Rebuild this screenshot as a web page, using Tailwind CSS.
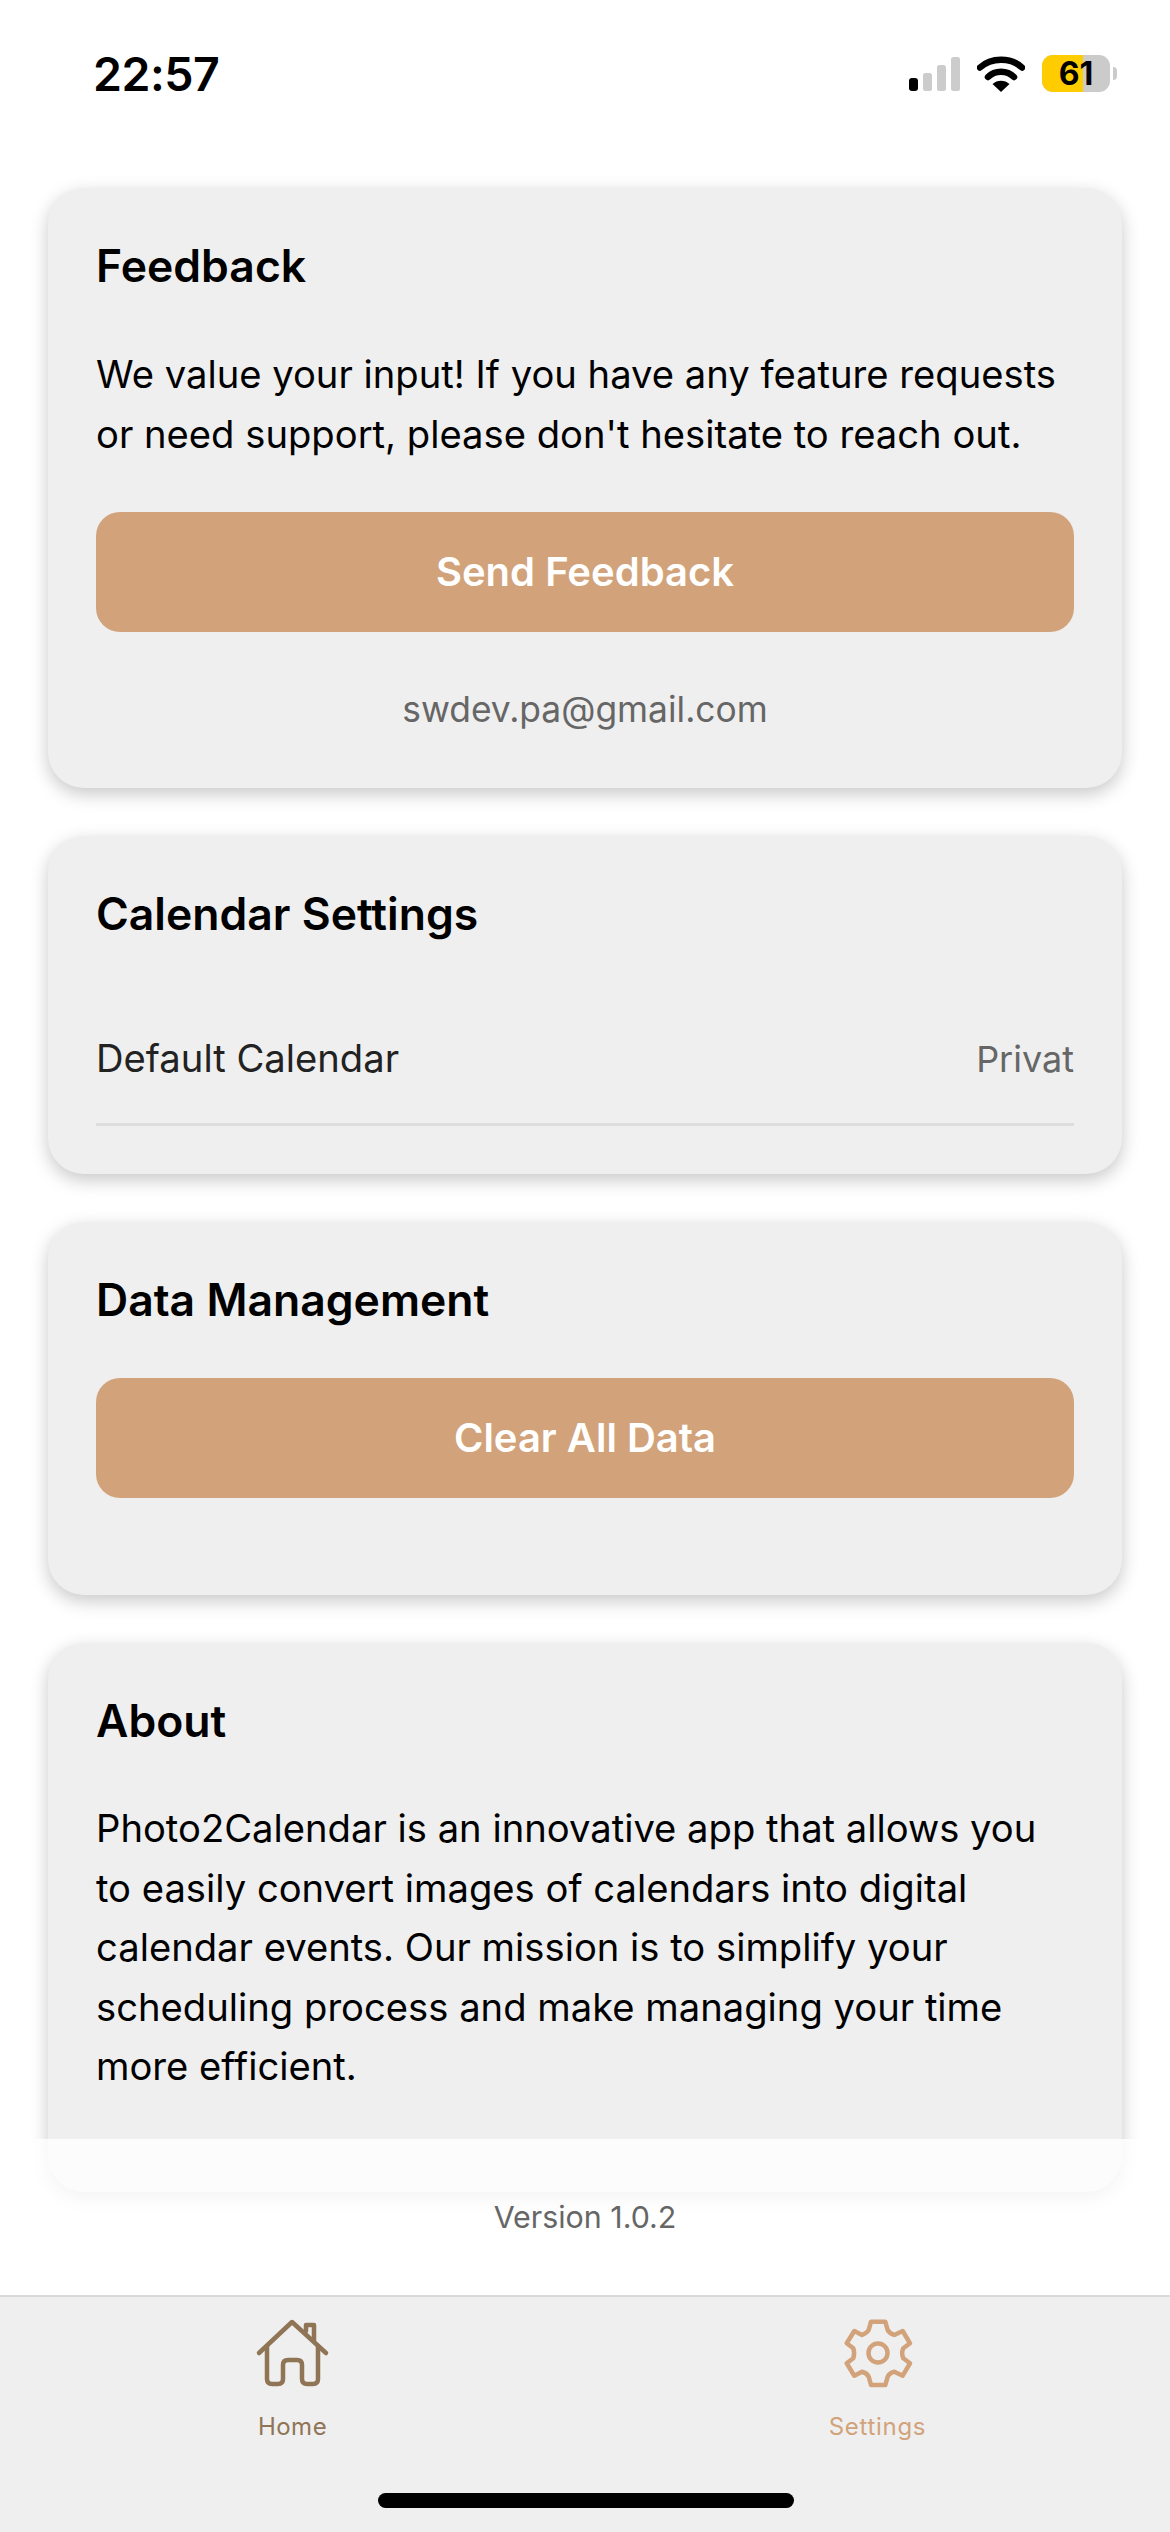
<!DOCTYPE html>
<html lang="en">
<head>
    <meta charset="UTF-8">
    <meta name="viewport" content="width=device-width, initial-scale=1.0">
    <title>Settings</title>
    <script src="https://cdn.jsdelivr.net/npm/@tailwindcss/browser@4"></script>
</head>
<body class="bg-white font-['Inter',sans-serif] text-black">
<div class="relative w-[1170px] h-[2532px] overflow-hidden flex flex-col">

    <!-- status bar -->
    <header class="h-[188px] shrink-0 flex justify-between items-start pl-[93px] pr-[53px] pt-[46px]">
        <span class="text-[46.5px] leading-[56px] font-semibold tracking-[-0.5px]">22:57</span>
        <div class="flex items-center gap-[17px] mt-[9px]">
            <svg width="51" height="34" viewBox="0 0 51 34">
                <rect x="0" y="21" width="9" height="13" rx="3" fill="#000"/>
                <rect x="14" y="16" width="9" height="18" rx="2.5" fill="#ccc"/>
                <rect x="28" y="8" width="9" height="26" rx="2.5" fill="#ccc"/>
                <rect x="42" y="0" width="9" height="34" rx="2.5" fill="#ccc"/>
            </svg>
            <svg width="48" height="36" viewBox="0 0 48 36">
                <path d="M3 11.5 C14 1 34 1 45 11.5" fill="none" stroke="#000" stroke-width="6.5" stroke-linecap="round"/>
                <path d="M11 21 C18 14 30 14 37 21" fill="none" stroke="#000" stroke-width="6.5" stroke-linecap="round"/>
                <path d="M24 36 L15.5 28 C20 23.5 28 23.5 32.5 28 Z" fill="#000"/>
            </svg>
            <div class="flex items-center gap-[3px]">
                <div class="relative w-[68px] h-[37px] rounded-[11px] overflow-hidden bg-[#cbcbcb]">
                    <div class="h-full w-[41px] bg-[#ffcc00]"></div>
                    <span class="absolute inset-0 flex items-center justify-center text-[32px] font-bold leading-none">61</span>
                </div>
                <div class="w-[4px] h-[13px] rounded-r-full bg-[#cbcbcb]"></div>
            </div>
        </div>
    </header>

    <!-- cards -->
    <main class="flex flex-col px-[48px] gap-[48px]">
        <section class="h-[600px] shrink-0 rounded-[36px] bg-[#efefef] shadow-[0_6px_18px_rgba(0,0,0,0.22)] px-[48px] pt-[50px]">
            <h2 class="text-[44.5px] leading-[56px] font-semibold">Feedback</h2>
            <p class="mt-[51px] text-[38.2px] leading-[59.5px]">We value your input! If you have any feature requests or need support, please don't hesitate to reach out.</p>
            <button class="mt-[48px] w-full h-[120px] rounded-[24px] bg-[#d2a37a] text-white text-[40px] font-semibold">Send Feedback</button>
            <p class="mt-[56px] text-center text-[35.4px] leading-[44px] text-[#666]">swdev.pa@gmail.com</p>
        </section>

        <section class="h-[338px] shrink-0 rounded-[36px] bg-[#efefef] shadow-[0_6px_18px_rgba(0,0,0,0.22)] px-[48px] pt-[50px]">
            <h2 class="text-[44.5px] leading-[56px] font-semibold">Calendar Settings</h2>
            <div class="mt-[52px] h-[132px] flex justify-between items-center border-b-[3px] border-[#ddd]">
                <span class="text-[38.2px] text-[#222]">Default Calendar</span>
                <span class="text-[36px] text-[#666]">Privat</span>
            </div>
        </section>

        <section class="h-[373px] shrink-0 rounded-[36px] bg-[#efefef] shadow-[0_6px_18px_rgba(0,0,0,0.22)] px-[48px] pt-[50px]">
            <h2 class="text-[44.5px] leading-[56px] font-semibold">Data Management</h2>
            <button class="mt-[50px] w-full h-[120px] rounded-[24px] bg-[#d2a37a] text-white text-[40px] font-semibold">Clear All Data</button>
        </section>

        <section class="h-[549px] shrink-0 rounded-[36px] bg-[#efefef] shadow-[0_6px_18px_rgba(0,0,0,0.22)] px-[48px] pt-[50px]">
            <h2 class="text-[44.5px] leading-[56px] font-semibold">About</h2>
            <p class="mt-[50px] text-[38.2px] leading-[59.5px]">Photo2Calendar is an innovative app that allows you to easily convert images of calendars into digital calendar events. Our mission is to simplify your scheduling process and make managing your time more efficient.</p>
        </section>
    </main>

    <!-- version footer sits over the scrolled cards -->
    <div class="absolute left-0 right-0 top-[2139px] h-[156px] bg-white/80 pt-[58px]">
        <p class="text-center text-[30.4px] leading-[40px] text-[#666]">Version 1.0.2</p>
    </div>

    <!-- tab bar -->
    <nav class="absolute left-0 right-0 bottom-0 h-[237px] bg-[#efefef] border-t-[2px] border-[#d9d9d9] flex">
        <a class="w-1/2 flex flex-col items-center pt-[21px] text-[#8f7556]">
            <svg width="76" height="70" viewBox="20 13 76 70" fill="none" stroke="#8f7556" stroke-width="4.5" stroke-linecap="round" stroke-linejoin="round">
                <path d="M24 48 L57 17 L91 48"/>
                <path d="M32 41 V74 Q32 79 37 79 H43 Q48 79 48 74 V60 Q48 55 53 55 H62 Q67 55 67 60 V74 Q67 79 72 79 H78 Q83 79 83 74 V41"/>
                <path d="M71 26 V20 H79 V36"/>
            </svg>
            <span class="mt-[24px] text-[24px] leading-[30px] tracking-[0.5px]">Home</span>
        </a>
        <a class="w-1/2 flex flex-col items-center pt-[21px] text-[#d2a37a]">
            <svg width="72" height="70" viewBox="16 13 72 70" fill="none" stroke="#d2a37a" stroke-width="4.5" stroke-linecap="round" stroke-linejoin="round">
                <path d="M45 16.7 H59.3 L61.7 25 Q63 28 68.3 30 L76.7 26 L84 38.3 L77.3 43.3 Q75 48 77.3 53.3 L84 58.3 L76.7 70.7 L68.3 66.7 Q63 68 61.7 71.7 L59.3 80 H45 L42.7 71.7 Q41 68 36 66.7 L28.3 70.7 L20.7 58.3 L27.3 53.3 Q29 48 27.3 43.3 L20.7 38.3 L28.3 26 L36 30 Q41 28 42.7 25 Z"/>
                <circle cx="52" cy="48" r="9.5"/>
            </svg>
            <span class="mt-[24px] text-[24px] leading-[30px] tracking-[0.7px]">Settings</span>
        </a>
        <div class="absolute left-[378px] top-[196px] w-[416px] h-[15px] rounded-full bg-black"></div>
    </nav>
</div>
</body>
</html>
